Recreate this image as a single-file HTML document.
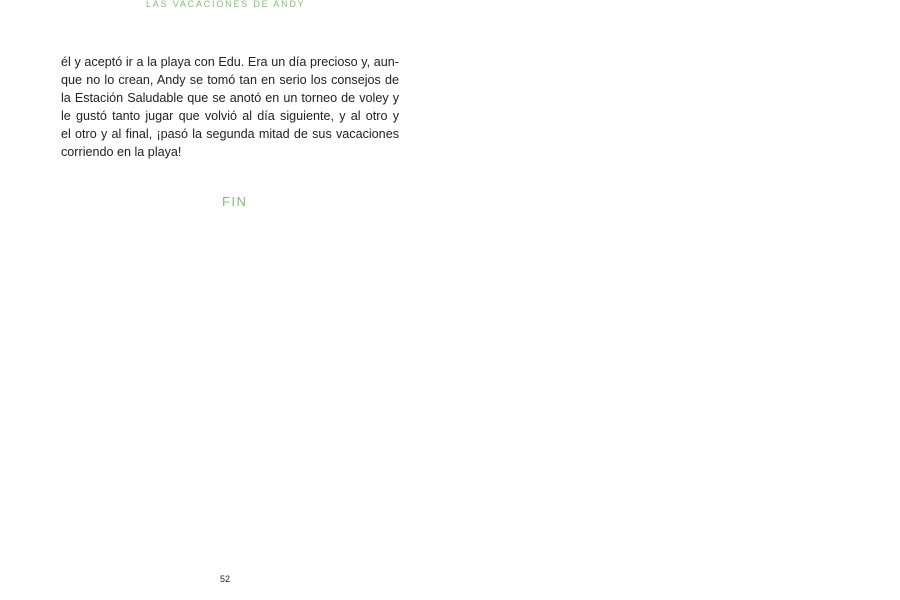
<!DOCTYPE html>
<html><head><meta charset="utf-8"><style>
body{margin:0;width:900px;height:600px;background:#fff;position:relative;overflow:hidden;font-family:"Liberation Sans",sans-serif;}
.h{position:absolute;left:146px;top:-1px;font-size:9px;letter-spacing:1.8px;color:#7cc46e;white-space:nowrap;}
.t{position:absolute;left:61px;width:338px;top:53px;font-size:12.6px;color:#222;}
.t div{height:18px;line-height:18px;text-align:justify;text-align-last:justify;white-space:nowrap;}
.t div.l{text-align-last:left;}
.fin{position:absolute;left:222px;top:194px;font-size:13px;letter-spacing:1.5px;color:#7cc46e;}
.p{position:absolute;left:220px;top:574px;font-size:9px;color:#222;}
</style></head><body>
<div class="h">LAS VACACIONES DE ANDY</div>
<div class="t">
<div>él y aceptó ir a la playa con Edu. Era un día precioso y, aun-</div>
<div>que no lo crean, Andy se tomó tan en serio los consejos de</div>
<div>la Estación Saludable que se anotó en un torneo de voley y</div>
<div>le gustó tanto jugar que volvió al día siguiente, y al otro y</div>
<div>el otro y al final, ¡pasó la segunda mitad de sus vacaciones</div>
<div class="l">corriendo en la playa!</div>
</div>
<div class="fin">FIN</div>
<div class="p">52</div>
</body></html>
